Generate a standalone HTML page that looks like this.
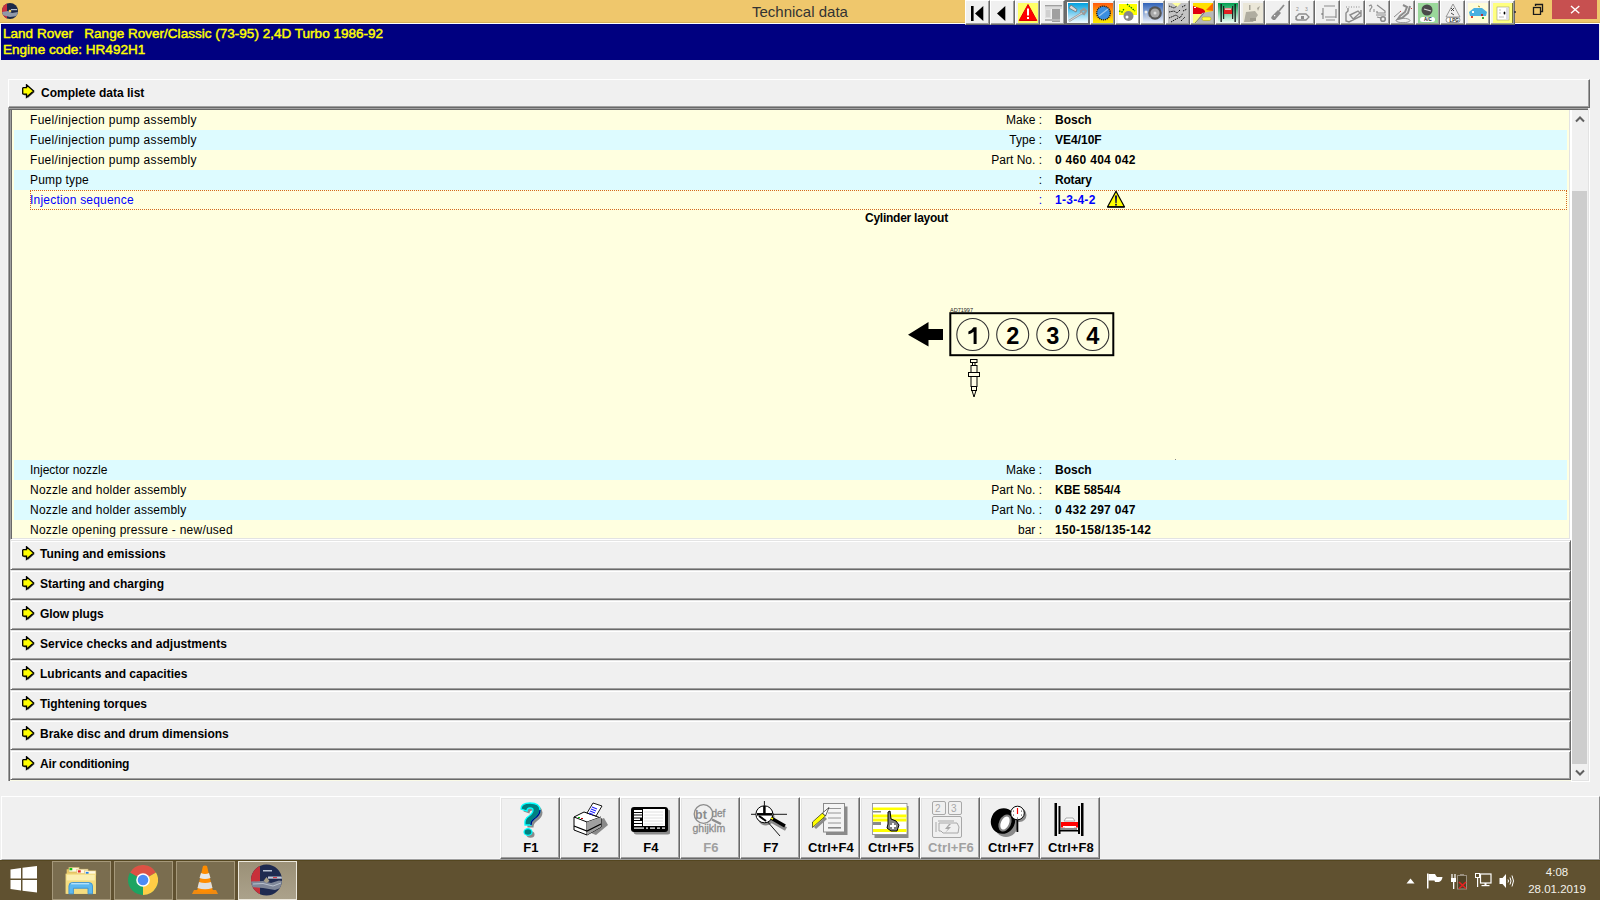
<!DOCTYPE html>
<html><head><meta charset="utf-8">
<style>
*{margin:0;padding:0;box-sizing:border-box}
html,body{width:1600px;height:900px;overflow:hidden;background:#f0f0f0;font-family:"Liberation Sans",sans-serif;position:relative}
.a{position:absolute}
svg{display:block}
#title{left:0;top:0;width:1600px;height:23px;background:#efc76c;border-bottom:1px solid #d7b05a}
#title .t{left:752px;top:3px;font-size:15px;color:#333}
#hdrline{left:0;top:23px;width:1600px;height:1px;background:#fff}
#hdr{left:1px;top:24px;width:1598px;height:36px;background:#000080;color:#ffff00;font-weight:normal;font-size:13.5px;letter-spacing:0.02px;-webkit-text-stroke:0.45px #ffff00}
#hdr .l1{left:2px;top:2px;white-space:pre}
#hdr .l2{left:2px;top:18px}
.tb{top:0;width:25px;height:25px;background:#f0f0f0;border-top:1px solid #fff;border-left:1px solid #fff;border-right:1px solid #696969;border-bottom:1px solid #696969;box-shadow:inset -1px -1px 0 #a0a0a0}
.tb svg{position:absolute;left:2px;top:2px}
.tb.pr{border:2px solid #6e6e6e;box-shadow:inset 1px 1px 0 #fff}
.tb.pr svg{left:1px;top:1px}
.sec{left:10px;width:1561px;height:30px;background:#f0f0f0;border-top:1px solid #e3e3e3;border-left:1px solid #e3e3e3;border-right:1px solid #696969;border-bottom:1px solid #696969;box-shadow:inset 1px 1px 0 #fff, inset -1px -1px 0 #a0a0a0}
.sec .lb{left:29px;top:6px;font-weight:bold;font-size:12px;color:#000}
.sec svg{position:absolute;left:11px;top:5px}
.row{left:14px;width:1553px;height:20px;font-size:12px;color:#000}
.y{background:#ffffe0}
.c{background:#ddfbff}
.row .l{left:16px;top:3px;letter-spacing:0.27px;white-space:nowrap}
.row .k{right:525px;top:3px;text-align:right;white-space:nowrap}
.row .v{left:1041px;top:3px;font-weight:bold;white-space:nowrap}
.fk{top:797px;width:60px;height:62px;background:#f0f0f0;border-top:1px solid #fff;border-left:1px solid #fff;border-right:1px solid #696969;border-bottom:1px solid #696969;box-shadow:inset -1px -1px 0 #a0a0a0, inset 1px 1px 0 #e3e3e3}
.fk .lb{left:1px;width:58px;top:42px;text-align:center;font-weight:bold;font-size:13px;letter-spacing:0.1px;white-space:nowrap}
.fk svg{position:absolute;left:9px;top:2px}
.tbtn{top:861px;width:59px;height:39px;background:#7a6d4f;border:1px solid #a5987a}
.tbtn.act{background:linear-gradient(#9b9077,#aba28b);border-color:#ece8dc}
</style></head><body>
<div id="title" class="a"><div class="t a">Technical data</div></div>
<div id="hdrline" class="a"></div>
<div id="hdr" class="a"><div class="l1 a">Land Rover   Range Rover/Classic (73-95) 2,4D Turbo 1986-92</div><div class="l2 a">Engine code: HR492H1</div></div>

<!-- TOOLBAR -->
<div class="tb a" style="left:965px"><svg width="20" height="20" viewBox="0 0 20 20"><rect x="3" y="3" width="2.6" height="15" fill="#000"/><path d="M7 10.5 L15.3 3 L15.3 18 Z" fill="#000"/></svg></div>
<div class="tb a" style="left:990px"><svg width="20" height="20" viewBox="0 0 20 20"><path d="M4 10.5 L12.3 3 L12.3 18 Z" fill="#000"/></svg></div>
<div class="tb a" style="left:1015px"><svg width="20" height="20" viewBox="0 0 20 20"><rect x="0" y="0" width="20" height="20" fill="#ffff66"/><path d="M10 1.5 L18.8 17.5 L1.2 17.5 Z" fill="#f00" stroke="#e00000" stroke-width="1" stroke-linejoin="round"/><rect x="9" y="5.5" width="2" height="7" fill="#fff"/><rect x="9" y="14" width="2" height="2" fill="#fff"/></svg></div>
<div class="tb a" style="left:1040px"><svg width="20" height="20" viewBox="0 0 20 20"><rect x="2" y="2" width="17" height="1.5" fill="#a0a0a0"/><rect x="2" y="4.5" width="17" height="1" fill="#c8c8c8"/><rect x="2" y="6" width="6" height="9" fill="#e0e0e0"/><rect x="3" y="7" width="4" height="7" fill="#d0d0d0"/><rect x="9" y="6" width="8" height="13" fill="#a0a0a0"/><rect x="2" y="16" width="15" height="2" fill="#b8b8b8"/></svg></div>
<div class="tb a pr" style="left:1065px"><svg width="20" height="20" viewBox="0 0 20 20"><defs><linearGradient id="g4" x1="0" y1="0" x2="0" y2="1"><stop offset="0" stop-color="#00a0e0"/><stop offset="1" stop-color="#f4fbff"/></linearGradient></defs><rect x="0" y="0" width="20" height="20" fill="url(#g4)"/><path d="M1 5 L8 9 L9 6.5 L3 2 Z" fill="#d8d8d8" stroke="#707070" stroke-width="0.8"/><path d="M1 18 L14 10 L16 11 L18 8 L16 6 L13 8 L13 10" fill="none" stroke="#9a9a9a" stroke-width="2.2"/><path d="M1 18 L14 10" stroke="#e8e8e8" stroke-width="0.8"/></svg></div>
<div class="tb a" style="left:1090px"><svg width="20" height="20" viewBox="0 0 20 20"><defs><linearGradient id="g5" x1="0" y1="0" x2="0" y2="1"><stop offset="0" stop-color="#ff5a10"/><stop offset="1" stop-color="#fff000"/></linearGradient></defs><rect x="0" y="0" width="20" height="20" fill="url(#g5)"/><circle cx="10.5" cy="10" r="6.8" fill="#3a8ee0" stroke="#1a1a1a" stroke-width="1.3" stroke-dasharray="1.2 0.8"/><path d="M6 13 L15 6" stroke="#9cc8f0" stroke-width="1.2"/></svg></div>
<div class="tb a" style="left:1115px"><svg width="20" height="20" viewBox="0 0 20 20"><rect x="0" y="0" width="20" height="20" fill="#ffffff"/><rect x="1" y="1" width="18" height="11" fill="#ffff00"/><circle cx="10.5" cy="13" r="5" fill="#888"/><circle cx="9" cy="14" r="1.5" fill="#fff"/><path d="M1 8 L4 9 L6 6 M9 1 L17 8" stroke="#008000" stroke-width="1.3" fill="none" stroke-dasharray="1.5 1"/></svg></div>
<div class="tb a" style="left:1140px"><svg width="20" height="20" viewBox="0 0 20 20"><defs><linearGradient id="g7" x1="0" y1="0" x2="0" y2="1"><stop offset="0" stop-color="#2f62b8"/><stop offset="1" stop-color="#eef2fb"/></linearGradient></defs><rect x="0" y="0" width="20" height="20" fill="url(#g7)"/><circle cx="12" cy="10" r="6.8" fill="#555"/><circle cx="12" cy="10" r="4.6" fill="#a8a8a8"/><circle cx="12" cy="10" r="1.5" fill="#ddd"/><circle cx="3" cy="9" r="1.5" fill="#eee"/><path d="M3 10.5 Q3 16 8 15" fill="none" stroke="#ccc" stroke-width="0.8"/></svg></div>
<div class="tb a" style="left:1165px"><svg width="20" height="20" viewBox="0 0 20 20"><rect x="0" y="0" width="20" height="20" fill="#c4c4c4"/><path d="M4 0 L13 0 L9 4 Z" fill="#ffffa0"/><path d="M1 3 L6 5 L9 3 M1 9 L6 8 L9 10 L12 7 M1 15 L8 12 L12 15 L15 10 M3 19 L10 15 M14 4 L18 2 M15 8 L19 6 M13 18 L17 14" stroke="#111" stroke-width="1" fill="none" stroke-dasharray="1.5 0.8"/></svg></div>
<div class="tb a" style="left:1190px"><svg width="20" height="20" viewBox="0 0 20 20"><rect x="0" y="0" width="20" height="20" fill="#ffff80"/><path d="M0 0 L20 0 L20 10 L0 10 Z" fill="#ffe000"/><path d="M13 7 L20 0 L20 8 Z" fill="#ff6a00"/><path d="M0 3 L10 6 L12 8 L12 11 L0 11 Z" fill="#e00010"/><rect x="1" y="4" width="2" height="1" fill="#fff"/><path d="M9 10 L20 8 L20 20 L3 20 Z" fill="#b8b8b8"/><path d="M2 20 L11 10" stroke="#666" stroke-width="0.8"/><rect x="9" y="14" width="9" height="3.5" rx="1.7" fill="#ffff40" stroke="#b0a000" stroke-width="0.5"/></svg></div>
<div class="tb a" style="left:1215px"><svg width="20" height="20" viewBox="0 0 20 20"><defs><linearGradient id="g10" x1="0" y1="0" x2="0" y2="1"><stop offset="0" stop-color="#00a050"/><stop offset="1" stop-color="#f2fff6"/></linearGradient></defs><rect x="0" y="0" width="20" height="20" fill="url(#g10)"/><rect x="2.5" y="1" width="1.3" height="18" fill="#111"/><rect x="16.5" y="1" width="1.3" height="18" fill="#111"/><rect x="5" y="3" width="1.2" height="13" fill="#222"/><rect x="14" y="3" width="1.2" height="13" fill="#222"/><path d="M6 7 L7 5 L13 5 L14 7 L14 11 L6 11 Z" fill="#e02020"/><rect x="7" y="5.5" width="6" height="1.2" fill="#fff"/></svg></div>
<div class="tb a" style="left:1240px"><svg width="20" height="20" viewBox="0 0 20 20"><rect x="0" y="0" width="20" height="20" fill="#ebe7d8"/><path d="M1 19 L3 9 L12 8 L15 12 L10 19 Z" fill="#b0ada0"/><rect x="6" y="2" width="1.5" height="5" fill="#a8a598"/><path d="M14 5 L17 3 L15 8" fill="#a8a598"/><rect x="7" y="15" width="6" height="3" fill="#9c998c"/></svg></div>
<div class="tb a" style="left:1265px"><svg width="20" height="20" viewBox="0 0 20 20"><path d="M16 2 L11 8" stroke="#8c8c8c" stroke-width="1.8"/><path d="M4 13 L10 7 L13 10 L7 17 L5 17 L3 15 Z" fill="#8c8c8c"/><rect x="6" y="12" width="1.3" height="1.3" fill="#fff"/></svg></div>
<div class="tb a" style="left:1290px"><svg width="20" height="20" viewBox="0 0 20 20"><text x="3" y="8" font-size="5" font-family="Liberation Sans" fill="#8c8c8c">2</text><text x="12" y="8" font-size="5" font-family="Liberation Sans" fill="#8c8c8c">3</text><path d="M3 14 L6 11 L13 11 L16 14 L13 17 L4 17 Z M3 13 L3 17" fill="none" stroke="#8c8c8c" stroke-width="1.3"/><rect x="8" y="13" width="3" height="3" fill="#8c8c8c"/></svg></div>
<div class="tb a" style="left:1315px"><svg width="20" height="20" viewBox="0 0 20 20"><path d="M6 3 L17 3 M5 5 L5 16 M18 6 L18 15 M7 14 L18 14 M8 17 L17 17 M4 10 L4 12" stroke="#8c8c8c" stroke-width="1.2" fill="none"/></svg></div>
<div class="tb a" style="left:1340px"><svg width="20" height="20" viewBox="0 0 20 20"><path d="M3 4 L18 4" stroke="#8c8c8c" stroke-width="1" stroke-dasharray="1 1.5"/><path d="M5 5 L5 8 L3 10 L3 18 L6 19 L18 13 L18 7 M7 12 L15 8 L17 10 L10 16 Z" stroke="#8c8c8c" stroke-width="1.4" fill="none"/></svg></div>
<div class="tb a" style="left:1365px"><svg width="20" height="20" viewBox="0 0 20 20"><path d="M1 3 L3 2 L4 4 L2 7 L2 9" stroke="#8c8c8c" stroke-width="1.1" fill="none"/><path d="M9 2 L17 8 L17 10 L9 10 L9 8 M8 12 L18 12 M9 14 L13 15" stroke="#8c8c8c" stroke-width="1.2" fill="none"/><circle cx="15" cy="16" r="2.3" fill="none" stroke="#8c8c8c" stroke-width="1.6"/><path d="M6 6 L6 9" stroke="#8c8c8c"/></svg></div>
<div class="tb a" style="left:1390px"><svg width="20" height="20" viewBox="0 0 20 20"><path d="M10 2 L14 4 L12 9 L7 13 L5 16 L9 15 L15 10 L17 3" stroke="#8c8c8c" stroke-width="2" fill="none"/><path d="M1 14 L8 8" stroke="#8c8c8c" stroke-width="1"/><ellipse cx="10" cy="17.5" rx="7" ry="2.2" fill="none" stroke="#8c8c8c" stroke-width="0.9"/><rect x="18" y="5" width="1" height="1" fill="#d04040"/><rect x="7" y="8" width="1" height="1" fill="#c05050"/></svg></div>
<div class="tb a" style="left:1415px"><svg width="20" height="20" viewBox="0 0 20 20"><rect x="0" y="0" width="20" height="20" fill="#9ad89a"/><circle cx="9" cy="7" r="5.5" fill="#4a4a4a"/><path d="M6 6 L13 8" stroke="#d8d8d8" stroke-width="1.3"/><rect x="2" y="14" width="15" height="5" rx="2.5" fill="#fff"/><text x="6" y="18.3" font-size="4.5" font-family="Liberation Sans" font-weight="bold" fill="#222">A/C</text></svg></div>
<div class="tb a" style="left:1440px"><svg width="20" height="20" viewBox="0 0 20 20"><path d="M10 1 L17 14 L3 14 Z" fill="none" stroke="#8c8c8c" stroke-width="0.9"/><path d="M8 5 L11 8 M11 5 L8 8 M8 10 L11 12" stroke="#222" stroke-width="0.8"/><rect x="3" y="14.5" width="14" height="5" rx="2.5" fill="#fff" stroke="#8c8c8c" stroke-width="0.9"/><text x="6.5" y="18.5" font-size="4.5" font-family="Liberation Sans" font-weight="bold" fill="#222">LPG</text></svg></div>
<div class="tb a" style="left:1465px"><svg width="20" height="20" viewBox="0 0 20 20"><rect x="0" y="0" width="20" height="20" fill="#fffcd8"/><path d="M1 9 L6 5 L14 5 L19 9 L18 13 L2 13 Z" fill="#48b0e0"/><circle cx="4" cy="14" r="1" fill="#c00"/><circle cx="14" cy="12" r="1" fill="#c00"/><circle cx="15" cy="15" r="1" fill="#080"/><rect x="4" y="8" width="2" height="2" fill="#fff"/><path d="M10 3 L12 4" stroke="#a09020"/></svg></div>
<div class="tb a" style="left:1490px"><svg width="20" height="20" viewBox="0 0 20 20"><rect x="0" y="0" width="20" height="20" fill="#ffff80"/><rect x="19" y="0" width="1" height="20" fill="#7a7a30"/><rect x="4" y="4" width="12" height="13" fill="#fff" stroke="#a0a070" stroke-width="0.6"/><rect x="13" y="5" width="2.5" height="11.5" fill="#dcdce6"/><ellipse cx="11.5" cy="10" rx="0.9" ry="1.6" fill="#000"/><path d="M6 7 L8 7 M6 10 L8 10 M6 14 L11 14" stroke="#aaa" stroke-width="0.8"/></svg></div>


<!-- complete data list header -->
<div class="a" style="left:8px;top:79px;width:1582px;height:29px;background:#f0f0f0;border-top:1px solid #fff;border-left:1px solid #fff;border-right:1px solid #696969;border-bottom:1px solid #696969;box-shadow:inset -1px -1px 0 #a0a0a0">
  <div class="a" style="left:13px;top:4px"><svg width="14" height="16" viewBox="0 0 14 16"><path d="M4.5 0.8 L11.6 7 L4.5 13.2 L4.5 10.2 L1.2 10.2 L0.7 9.5 L0.7 4.3 L1.2 3.7 L4.5 3.7 Z" transform="translate(1,1)" fill="#404040"/><path d="M4.5 0.8 L11.6 7 L4.5 13.2 L4.5 10.2 L1.2 10.2 L0.7 9.5 L0.7 4.3 L1.2 3.7 L4.5 3.7 Z" fill="#ffff00" stroke="#000" stroke-width="1.3"/></svg></div>
  <div class="a" style="left:32px;top:6px;font-weight:bold;font-size:12px">Complete data list</div>
</div>

<!-- list frame -->
<div class="a" style="left:7px;top:108px;width:1px;height:673px;background:#f5f5f5"></div>
<div class="a" style="left:8px;top:108px;width:1580px;height:673px;border-left:1px solid #a0a0a0;border-top:1px solid #a0a0a0;box-shadow:inset 1px 1px 0 #696969;background:#f0f0f0"></div>
<div class="a" style="left:10px;top:110px;width:1561px;height:430px;border-left:1px solid #a0a0a0;border-bottom:1px solid #fff;border-right:1px solid #fff;box-shadow:inset 1px 0 0 #696969, inset -1px -1px 0 #e3e3e3;background:#ffffe0"></div>
<div class="a" style="left:10px;top:780px;width:1561px;height:1px;background:#fafae6"></div>
<div class="row a y" style="top:110px"><div class="l a" style="letter-spacing:0.31px">Fuel/injection pump assembly</div><div class="k a">Make :</div><div class="v a">Bosch</div></div>
<div class="row a c" style="top:130px"><div class="l a" style="letter-spacing:0.31px">Fuel/injection pump assembly</div><div class="k a">Type :</div><div class="v a">VE4/10F</div></div>
<div class="row a y" style="top:150px"><div class="l a" style="letter-spacing:0.31px">Fuel/injection pump assembly</div><div class="k a">Part No. :</div><div class="v a" style="letter-spacing:0.3px">0 460 404 042</div></div>
<div class="row a c" style="top:170px"><div class="l a" style="letter-spacing:0.17px">Pump type</div><div class="k a">:</div><div class="v a" style="letter-spacing:-0.2px">Rotary</div></div>
<div class="row a y" style="top:190px"><div class="l a" style="color:#0000ff;letter-spacing:0.21px">Injection sequence</div><div class="k a" style="color:#0000ff">:</div><div class="v a" style="color:#0000ff;letter-spacing:0.27px">1-3-4-2</div></div>
<div class="a" style="left:30px;top:190px;width:1537px;height:20px;border:1px dotted #d2691e"></div>

<div class="row a c" style="top:460px"><div class="l a" style="letter-spacing:0px">Injector nozzle</div><div class="k a">Make :</div><div class="v a">Bosch</div></div>
<div class="row a y" style="top:480px"><div class="l a" style="letter-spacing:0.22px">Nozzle and holder assembly</div><div class="k a">Part No. :</div><div class="v a">KBE 5854/4</div></div>
<div class="row a c" style="top:500px"><div class="l a" style="letter-spacing:0.22px">Nozzle and holder assembly</div><div class="k a">Part No. :</div><div class="v a" style="letter-spacing:0.3px">0 432 297 047</div></div>
<div class="row a y" style="top:520px;height:18px"><div class="l a" style="letter-spacing:0.24px">Nozzle opening pressure - new/used</div><div class="k a">bar :</div><div class="v a" style="letter-spacing:0.33px">150-158/135-142</div></div>

<div class="sec a" style="top:540px"><svg width="14" height="16" viewBox="0 0 14 16"><path d="M4.5 0.8 L11.6 7 L4.5 13.2 L4.5 10.2 L1.2 10.2 L0.7 9.5 L0.7 4.3 L1.2 3.7 L4.5 3.7 Z" transform="translate(1,1)" fill="#404040"/><path d="M4.5 0.8 L11.6 7 L4.5 13.2 L4.5 10.2 L1.2 10.2 L0.7 9.5 L0.7 4.3 L1.2 3.7 L4.5 3.7 Z" fill="#ffff00" stroke="#000" stroke-width="1.3"/></svg><div class="lb a" style="letter-spacing:0px">Tuning and emissions</div></div>
<div class="sec a" style="top:570px"><svg width="14" height="16" viewBox="0 0 14 16"><path d="M4.5 0.8 L11.6 7 L4.5 13.2 L4.5 10.2 L1.2 10.2 L0.7 9.5 L0.7 4.3 L1.2 3.7 L4.5 3.7 Z" transform="translate(1,1)" fill="#404040"/><path d="M4.5 0.8 L11.6 7 L4.5 13.2 L4.5 10.2 L1.2 10.2 L0.7 9.5 L0.7 4.3 L1.2 3.7 L4.5 3.7 Z" fill="#ffff00" stroke="#000" stroke-width="1.3"/></svg><div class="lb a" style="letter-spacing:0px">Starting and charging</div></div>
<div class="sec a" style="top:600px"><svg width="14" height="16" viewBox="0 0 14 16"><path d="M4.5 0.8 L11.6 7 L4.5 13.2 L4.5 10.2 L1.2 10.2 L0.7 9.5 L0.7 4.3 L1.2 3.7 L4.5 3.7 Z" transform="translate(1,1)" fill="#404040"/><path d="M4.5 0.8 L11.6 7 L4.5 13.2 L4.5 10.2 L1.2 10.2 L0.7 9.5 L0.7 4.3 L1.2 3.7 L4.5 3.7 Z" fill="#ffff00" stroke="#000" stroke-width="1.3"/></svg><div class="lb a" style="letter-spacing:-0.12px">Glow plugs</div></div>
<div class="sec a" style="top:630px"><svg width="14" height="16" viewBox="0 0 14 16"><path d="M4.5 0.8 L11.6 7 L4.5 13.2 L4.5 10.2 L1.2 10.2 L0.7 9.5 L0.7 4.3 L1.2 3.7 L4.5 3.7 Z" transform="translate(1,1)" fill="#404040"/><path d="M4.5 0.8 L11.6 7 L4.5 13.2 L4.5 10.2 L1.2 10.2 L0.7 9.5 L0.7 4.3 L1.2 3.7 L4.5 3.7 Z" fill="#ffff00" stroke="#000" stroke-width="1.3"/></svg><div class="lb a" style="letter-spacing:0.05px">Service checks and adjustments</div></div>
<div class="sec a" style="top:660px"><svg width="14" height="16" viewBox="0 0 14 16"><path d="M4.5 0.8 L11.6 7 L4.5 13.2 L4.5 10.2 L1.2 10.2 L0.7 9.5 L0.7 4.3 L1.2 3.7 L4.5 3.7 Z" transform="translate(1,1)" fill="#404040"/><path d="M4.5 0.8 L11.6 7 L4.5 13.2 L4.5 10.2 L1.2 10.2 L0.7 9.5 L0.7 4.3 L1.2 3.7 L4.5 3.7 Z" fill="#ffff00" stroke="#000" stroke-width="1.3"/></svg><div class="lb a" style="letter-spacing:0px">Lubricants and capacities</div></div>
<div class="sec a" style="top:690px"><svg width="14" height="16" viewBox="0 0 14 16"><path d="M4.5 0.8 L11.6 7 L4.5 13.2 L4.5 10.2 L1.2 10.2 L0.7 9.5 L0.7 4.3 L1.2 3.7 L4.5 3.7 Z" transform="translate(1,1)" fill="#404040"/><path d="M4.5 0.8 L11.6 7 L4.5 13.2 L4.5 10.2 L1.2 10.2 L0.7 9.5 L0.7 4.3 L1.2 3.7 L4.5 3.7 Z" fill="#ffff00" stroke="#000" stroke-width="1.3"/></svg><div class="lb a" style="letter-spacing:-0.09px">Tightening torques</div></div>
<div class="sec a" style="top:720px"><svg width="14" height="16" viewBox="0 0 14 16"><path d="M4.5 0.8 L11.6 7 L4.5 13.2 L4.5 10.2 L1.2 10.2 L0.7 9.5 L0.7 4.3 L1.2 3.7 L4.5 3.7 Z" transform="translate(1,1)" fill="#404040"/><path d="M4.5 0.8 L11.6 7 L4.5 13.2 L4.5 10.2 L1.2 10.2 L0.7 9.5 L0.7 4.3 L1.2 3.7 L4.5 3.7 Z" fill="#ffff00" stroke="#000" stroke-width="1.3"/></svg><div class="lb a" style="letter-spacing:0px">Brake disc and drum dimensions</div></div>
<div class="sec a" style="top:750px"><svg width="14" height="16" viewBox="0 0 14 16"><path d="M4.5 0.8 L11.6 7 L4.5 13.2 L4.5 10.2 L1.2 10.2 L0.7 9.5 L0.7 4.3 L1.2 3.7 L4.5 3.7 Z" transform="translate(1,1)" fill="#404040"/><path d="M4.5 0.8 L11.6 7 L4.5 13.2 L4.5 10.2 L1.2 10.2 L0.7 9.5 L0.7 4.3 L1.2 3.7 L4.5 3.7 Z" fill="#ffff00" stroke="#000" stroke-width="1.3"/></svg><div class="lb a" style="letter-spacing:-0.17px">Air conditioning</div></div>

<div class="a" style="left:865px;top:211px;font-weight:bold;font-size:12px;letter-spacing:-0.25px">Cylinder layout</div>
<div class="a" style="left:1107px;top:190px"><svg width="20" height="19" viewBox="0 0 20 19"><path d="M9 1.2 L17.4 16.8 L0.6 16.8 Z" fill="#ffff00" stroke="#000" stroke-width="1.2" stroke-linejoin="round"/><rect x="0.3" y="16.3" width="17.4" height="1.3" fill="#000"/><path d="M7.9 5.5 L10.1 5.5 L9.6 13 L8.4 13 Z" fill="#10104a"/><rect x="8.1" y="13.8" width="1.8" height="1.8" fill="#10104a"/></svg></div>
<div class="a" style="left:900px;top:300px"><svg width="220" height="105" viewBox="0 0 220 105">
<path d="M8 34.7 L28.5 22 L28.5 29 L43 29 L43 40 L28.5 40 L28.5 46.5 Z" fill="#000"/>
<rect x="50.3" y="13.2" width="163" height="42" fill="none" stroke="#000" stroke-width="2"/>
<text x="50" y="12" font-size="5.5" font-family="Liberation Sans" fill="#222">AD71997</text>
<g fill="none" stroke="#333" stroke-width="1.1">
<circle cx="72.8" cy="34.5" r="16"/><circle cx="112.7" cy="34.5" r="16"/><circle cx="152.8" cy="34.5" r="16"/><circle cx="192.8" cy="34.5" r="16"/></g>
<g font-family="Liberation Sans" font-weight="bold" font-size="23.5" fill="#000" text-anchor="middle">
<path d="M73.6 27.3 L76.6 27.3 L76.6 44 L73.6 44 L73.6 31.8 Q71 33.8 68.4 34.3 L68.4 31.6 Q72 30 73.6 27.3 Z" fill="#000"/><text x="112.7" y="43.5">2</text><text x="152.8" y="43.5">3</text><text x="192.8" y="43.5">4</text></g>
<g fill="#fffde6" stroke="#000" stroke-width="1">
<rect x="70.5" y="59.5" width="6.5" height="3"/>
<rect x="72.5" y="62.5" width="2.5" height="3"/>
<rect x="71" y="65.5" width="6" height="7"/>
<rect x="68.5" y="72.5" width="11" height="4"/>
<rect x="71" y="76.5" width="6" height="10"/>
<rect x="71.5" y="86.5" width="5" height="4"/>
<path d="M72 90.5 L76 90.5 L74 97 Z"/>
</g>
</svg></div>
<div class="a" style="left:1175px;top:459px;width:1px;height:1px;background:#888"></div>

<div class="a" style="left:2px;top:3px"><svg width="16" height="16" viewBox="0 0 16 16"><defs><clipPath id="tc"><circle cx="8" cy="8" r="8"/></clipPath></defs><g clip-path="url(#tc)"><rect width="16" height="16" fill="#1e2848"/><rect width="5" height="16" fill="#c83040"/><path d="M0 9 L6 8 L10 10 L16 9 L16 13 L8 14 L0 12 Z" fill="#9098a8"/><rect x="9" y="6" width="6" height="1.2" fill="#b8c0d0"/></g><circle cx="8" cy="8" r="1.3" fill="#f0d060"/></svg></div>
<div class="a" style="left:1552px;top:0;width:45px;height:19px;background:#c75050"></div>
<div class="a" style="left:1570px;top:5px"><svg width="10" height="10" viewBox="0 0 10 10"><path d="M1 1 L9.3 8.3 M9.3 1 L1 8.3" stroke="#fff" stroke-width="1.4"/></svg></div>
<div class="a" style="left:1514px;top:11px;width:2px;height:2px;background:#2a2a3a;border-radius:1px"></div>
<div class="a" style="left:1532px;top:3px"><svg width="12" height="12" viewBox="0 0 12 12"><rect x="1.5" y="4.5" width="7" height="7" fill="none" stroke="#1a1a1a" stroke-width="1.3"/><path d="M3.5 3 L3.5 1.5 L10.5 1.5 L10.5 8.5 L9 8.5" fill="none" stroke="#1a1a1a" stroke-width="1.3"/></svg></div>


<!-- scrollbar -->
<div class="a" style="left:1571px;top:110px;width:19px;height:672px;background:#f0f0f0;border:1px solid #fff;border-top:0;box-shadow:inset -1px -1px 0 #e3e3e3"></div>
<div class="a" style="left:1572px;top:191px;width:15px;height:573px;background:#cdcdcd"></div>
<div class="a" style="left:1575px;top:115px"><svg width="10" height="8" viewBox="0 0 10 8"><path d="M1 6.5 L5 2.5 L9 6.5" fill="none" stroke="#606060" stroke-width="2"/></svg></div>
<div class="a" style="left:1575px;top:769px"><svg width="10" height="8" viewBox="0 0 10 8"><path d="M1 1.5 L5 5.5 L9 1.5" fill="none" stroke="#606060" stroke-width="2"/></svg></div>


<!-- bottom strip -->
<div class="a" style="left:1px;top:796px;width:1599px;height:64px;border-top:1px solid #fff;border-left:1px solid #fff;border-right:1px solid #8a8a8a;border-bottom:1px solid #a0a0a0;box-shadow:inset 0 -1px 0 #f5f5f5"></div>
<div class="fk a" style="left:500px"><svg width="40" height="40" viewBox="0 0 40 40"><g transform="translate(2.5,2.5)" fill="#8a8a8a"><path d="M11 9 Q11 3 20 3 Q30 3 30 10 Q30 15 24 19 Q21 21 21 25 L15 25 Q14 19 19 16 Q23 13 23 10 Q23 8 20 8 Q17 8 17 11 Z"/><ellipse cx="18" cy="32" rx="4" ry="3.3"/></g><path d="M11 9 Q11 3 20 3 Q30 3 30 10 Q30 15 24 19 Q21 21 21 25 L15 25 Q14 19 19 16 Q23 13 23 10 Q23 8 20 8 Q17 8 17 11 Z" fill="#008080" stroke="#00ffff" stroke-width="1.3"/><path d="M30 10 Q30 15 24 19 Q21 21 21 25" fill="none" stroke="#000080" stroke-width="1.3"/><ellipse cx="18" cy="32" rx="4" ry="3.3" fill="#008080" stroke="#00ffff" stroke-width="1.2"/></svg><div class="lb a">F1</div></div>
<div class="fk a" style="left:560px"><svg width="40" height="40" viewBox="0 0 40 40"><path d="M8 28 L26 35 L38 25 L34 18 Z" fill="#8a8a8a"/><path d="M4 17 L14 12 L31 18 L31 27 L17 35 L4 30 Z" fill="#fff" stroke="#000" stroke-width="1"/><path d="M4 17 L17 22 L31 17 M17 22 L17 35" fill="none" stroke="#000" stroke-width="1"/><path d="M17 22 L31 17 L31 27 L17 35 Z" fill="#a0a0a0"/><path d="M4 26 L17 31 L31 24" fill="none" stroke="#000" stroke-width="1.2"/><path d="M17 13 L23 3 L32 6 L26 16 Z" fill="#fff" stroke="#000" stroke-width="0.9"/><path d="M22 7 L27 9 M21 9 L26 11 M20 11 L25 13 M19 13 L23 14.5" stroke="#2020ff" stroke-width="1.1"/><rect x="8" y="17" width="2" height="1" fill="#00c000"/><rect x="11" y="18" width="2" height="1" fill="#c00000"/></svg><div class="lb a">F2</div></div>
<div class="fk a" style="left:620px"><svg width="40" height="40" viewBox="0 0 40 40"><rect x="3.5" y="9.5" width="37" height="25" rx="3" fill="#8a8a8a"/><rect x="1" y="7" width="37" height="25" rx="3" fill="#000"/><rect x="13" y="9" width="22" height="17" fill="#fff"/><g stroke="#d8d8d8" stroke-width="0.8"><path d="M14 12 L33 12 M14 15 L33 15 M14 18 L33 18 M14 21 L33 21 M14 24 L33 24"/></g><g fill="#fff"><rect x="4" y="10" width="8" height="2"/><rect x="4" y="13" width="8" height="1.5"/><rect x="4" y="15.5" width="8" height="2"/><rect x="4" y="18.5" width="6" height="1.5"/><rect x="4" y="21" width="8" height="2"/><rect x="4" y="24" width="8" height="2"/><rect x="4" y="27.5" width="10" height="1.2"/><rect x="16" y="27.5" width="2" height="1.2"/><rect x="20" y="27.5" width="5" height="1.2"/><rect x="27" y="27.5" width="3" height="1.2"/><rect x="32" y="27.5" width="3" height="1.2"/></g></svg><div class="lb a">F4</div></div>
<div class="fk a" style="left:680px"><svg width="40" height="40" viewBox="0 0 40 40"><g fill="none" stroke="#8c8c8c"><circle cx="13.5" cy="14" r="9.3" stroke-width="1.3"/><path d="M22 19.5 L31 24" stroke-width="2.4"/></g><g font-family="Liberation Sans" fill="#8c8c8c"><text x="5" y="19" font-size="12.5" font-weight="bold">bt</text><text x="21.5" y="17" font-size="10" stroke="#8c8c8c" stroke-width="0.3">def</text><text x="2.5" y="31.5" font-size="10.5" stroke="#8c8c8c" stroke-width="0.3">ghijklm</text></g></svg><div class="lb a" style="color:#a0a0a0">F6</div></div>
<div class="fk a" style="left:740px"><svg width="40" height="40" viewBox="0 0 40 40"><path d="M20 20 L36 29" stroke="#8a8a8a" stroke-width="4"/><circle cx="16" cy="17" r="8.5" fill="#8a8a8a"/><path d="M1 14.3 L37 14.3 M14.4 1 L14.4 14 M16 20 L30 36" stroke="#000" stroke-width="0.9"/><circle cx="14.4" cy="14.3" r="8.5" fill="#fff" stroke="#000" stroke-width="1"/><path d="M7 14.3 L22 14.3" stroke="#000" stroke-width="2.5"/><path d="M14.4 6 L14.4 14" stroke="#000" stroke-width="2.5"/><path d="M9 16 L16 21" stroke="#000" stroke-width="2"/><path d="M21 18 L35 26" stroke="#000" stroke-width="3.2"/><path d="M21 18 L23 19" stroke="#ffff00" stroke-width="1.5"/></svg><div class="lb a">F7</div></div>
<div class="fk a" style="left:800px"><svg width="40" height="40" viewBox="0 0 40 40"><rect x="16" y="6.5" width="21.5" height="28.5" fill="#8a8a8a"/><rect x="13.5" y="3.5" width="21" height="28.5" fill="#f4f4f4" stroke="#8a8a8a" stroke-width="1"/><g stroke="#8a8a8a" stroke-width="0.9"><path d="M18 8.5 L31 8.5 M18 13 L31 13 M18 18 L31 18 M18 23 L31 23"/></g><rect x="18" y="27" width="13" height="1.6" fill="#8a8a8a"/><path d="M4 27 L15 17 L17 19 L6 29 Z" fill="#8a8a8a"/><path d="M2.5 22 L12.5 13 L15.5 16 L2.5 27.5 Z" fill="#ffff00" stroke="#000" stroke-width="0.6"/><path d="M12.5 13 L19 7.5 L15.5 16 Z" fill="#fff" stroke="#000" stroke-width="0.6"/></svg><div class="lb a">Ctrl+F4</div></div>
<div class="fk a" style="left:860px"><svg width="40" height="40" viewBox="0 0 40 40"><rect x="4.5" y="6" width="34" height="32" fill="#8a8a8a"/><rect x="2.5" y="3.5" width="34.5" height="31" fill="#fff" stroke="#8a8a8a" stroke-width="0.8"/><g fill="#ffff00"><rect x="3" y="7.5" width="33.5" height="2.5"/><rect x="3" y="14.5" width="33.5" height="3"/><rect x="3" y="18.5" width="33.5" height="3"/><rect x="3" y="29" width="33.5" height="3"/></g><g fill="#8a8a8a"><rect x="3" y="22" width="8" height="3"/><rect x="3" y="11" width="8" height="1.5"/></g><path d="M18 12 L20 11 L21 19 L26 21 L29 25 L27 31 L21 31 L17 28 L18 24 Z" fill="#808080" stroke="#000" stroke-width="1"/><path d="M23 23 L23 29 M20 26 L26 26" stroke="#fff" stroke-width="1.8"/></svg><div class="lb a">Ctrl+F5</div></div>
<div class="fk a" style="left:920px"><svg width="40" height="40" viewBox="0 0 40 40"><g fill="none" stroke="#a8a8a8" stroke-width="1"><rect x="2.5" y="1.5" width="13" height="13" rx="1.5"/><rect x="18.5" y="1.5" width="13" height="13" rx="1.5"/><rect x="2.5" y="16.5" width="29" height="21" rx="1.5"/><path d="M6 22 L6 32 M8 21 L24 21 M9 23 L27 23 L29 27 L28 33 L13 33 L11 31 L9 31 L9 23"/></g><g font-family="Liberation Sans" fill="#a8a8a8" font-size="10"><text x="5" y="12">2</text><text x="21" y="12">3</text></g><path d="M19 24 L15 29 L18 29 L15 33 L21 27 L18 27 L21 24 Z" fill="#a8a8a8"/></svg><div class="lb a" style="color:#a0a0a0">Ctrl+F6</div></div>
<div class="fk a" style="left:980px"><svg width="40" height="40" viewBox="0 0 40 40"><g transform="translate(2,2)" fill="#8a8a8a"><ellipse cx="14" cy="22" rx="12" ry="13"/><circle cx="27.5" cy="13" r="7"/></g><ellipse cx="13" cy="21" rx="12" ry="13" fill="#000" transform="rotate(25 13 21)"/><ellipse cx="15" cy="23" rx="6" ry="9" fill="#808080" transform="rotate(25 15 23)"/><ellipse cx="15" cy="23" rx="4" ry="7" fill="#fff" transform="rotate(25 15 23)"/><rect x="26.5" y="17" width="1.8" height="15" fill="#000"/><circle cx="27.5" cy="13" r="6.8" fill="#fff" stroke="#000" stroke-width="1"/><path d="M27.5 8 L27.5 14" stroke="#ff0000" stroke-width="1.2"/><g fill="#000"><circle cx="23.5" cy="11" r="0.5"/><circle cx="31.5" cy="11" r="0.5"/><circle cx="23.5" cy="15" r="0.5"/><circle cx="31.5" cy="15" r="0.5"/><circle cx="27.5" cy="18" r="0.5"/></g></svg><div class="lb a">Ctrl+F7</div></div>
<div class="fk a" style="left:1040px"><svg width="40" height="40" viewBox="0 0 40 40"><g fill="#000"><rect x="4.5" y="3" width="2.5" height="33"/><rect x="8.5" y="6" width="2" height="28"/><rect x="28" y="6" width="2" height="28"/><rect x="31" y="3" width="2.5" height="33"/></g><rect x="10" y="30" width="18" height="1.5" fill="#000"/><rect x="11" y="28" width="16" height="2" fill="#8a8a8a"/><path d="M14 21 L16 18 L23 18 L25 21 Z" fill="#fff" stroke="#8a8a8a" stroke-width="0.7"/><path d="M11 22 L28 22 L28 26 L11 26 Z" fill="#ff0000"/><rect x="11" y="25" width="4" height="2.5" fill="#ff0000"/><rect x="24" y="25" width="4" height="2.5" fill="#ff0000"/><rect x="13" y="26" width="13" height="1.5" fill="#fff"/></svg><div class="lb a">Ctrl+F8</div></div>


<div class="a" style="left:0;top:860px;width:1600px;height:40px;background:#605130"></div>
<div class="a" style="left:0;top:860px;width:1600px;height:1px;background:#54461f"></div>
<div class="a" style="left:10px;top:866px"><svg width="28" height="27" viewBox="0 0 28 27"><path d="M0.5 3.5 L11 2 L11 12.5 L0.5 12.5 Z M12.5 1.8 L27 0 L27 12.5 L12.5 12.5 Z M0.5 14 L11 14 L11 24.5 L0.5 23 Z M12.5 14 L27 14 L27 26.5 L12.5 24.7 Z" fill="#fff"/></svg></div>
<div class="a tbtn" style="left:52px"></div>
<div class="a tbtn" style="left:114px"></div>
<div class="a tbtn" style="left:176px"></div>
<div class="a tbtn act" style="left:238px"></div>
<div class="a" style="left:65px;top:866px"><svg width="32" height="31" viewBox="0.5 1.5 28.5 27">
<path d="M2 4 L12 4 L13 6 L28 6 L28 26 L2 26 Z" fill="#e8c868"/>
<rect x="4" y="2.5" width="9" height="4" fill="#fff8e0" stroke="#d8b860" stroke-width="0.5"/><rect x="4.5" y="3" width="2.5" height="2" fill="#10c010"/>
<rect x="11" y="4" width="10" height="4" fill="#fff8e0" stroke="#d8b860" stroke-width="0.5"/><rect x="12" y="5" width="2.5" height="2" fill="#e02020"/>
<rect x="18" y="5.5" width="10" height="4" fill="#fff8e0" stroke="#d8b860" stroke-width="0.5"/><rect x="19" y="6.5" width="2.5" height="2" fill="#2080f0"/>
<path d="M1 8 L28 8 L28 26 L1 26 Z" fill="#f4dc80"/><path d="M2 9 L27 9 L27 14 L2 14 Z" fill="#fbeeb0"/>
<path d="M4 26 L4 19 Q4 16 7 16 L22 16 Q25 16 25 19 L25 26 L21 26 L21 21 L8 21 L8 26 Z" fill="#5cb8f0" stroke="#3a90d0" stroke-width="0.8"/>
<path d="M6 17 L22 17" stroke="#c8ecff" stroke-width="1"/></svg></div>
<div class="a" style="left:128px;top:865px"><svg width="30" height="30" viewBox="0 0 30 30">
<circle cx="15" cy="15" r="15" fill="#1da462"/>
<path d="M15 15 L2 7.5 A15 15 0 0 1 28 7.5 Z" fill="#dd5144"/>
<path d="M15 15 L28 7.5 A15 15 0 0 1 15 30 Z" fill="#ffcd46"/>
<circle cx="15" cy="15" r="6.8" fill="#fff"/><circle cx="15" cy="15" r="5.3" fill="#4c8bf5"/></svg></div>
<div class="a" style="left:191px;top:865px"><svg width="28" height="30" viewBox="0 0 28 30">
<path d="M3 25 L25 25 L27 29 L1 29 Z" fill="#f08a10"/>
<path d="M12 1 Q14 0 16 1 L22 26 Q14 29 6 26 Z" fill="#ff8c00"/>
<path d="M10 8 Q14 10 18 8 L19.5 13 Q14 15 8.5 13 Z" fill="#e8e8e8"/>
<path d="M8 17 Q14 19 20 17 L21.5 23 Q14 25.5 6.5 23 Z" fill="#e0e0e0"/></svg></div>
<div class="a" style="left:251px;top:864px"><svg width="32" height="32" viewBox="0 0 32 32">
<defs><clipPath id="dc"><circle cx="15.5" cy="16" r="15.5"/></clipPath></defs>
<g clip-path="url(#dc)"><rect x="0" y="0" width="32" height="32" fill="#1e2a50"/><rect x="0" y="0" width="9" height="32" fill="#c8303a"/>
<path d="M0 17.5 L12 17 L20 19 L28 16.5 L32 17 L32 23 L24 26 L12 24 L0 23 Z" fill="#7e8698"/><path d="M2 20 L12 19.5 L22 22 L30 19" stroke="#b8c0cc" stroke-width="1" fill="none"/><rect x="17" y="12.5" width="14" height="2.2" fill="#c0c8d8"/><rect x="22" y="13" width="4" height="1.2" fill="#d04050"/><rect x="12" y="6" width="9" height="1.5" fill="#b8c0d0"/></g>
<path d="M15.5 13 L18.5 17 L15.5 19 L12.5 17 Z" fill="#a89f88"/></svg></div>
<div class="a" style="left:1406px;top:878px"><svg width="10" height="6" viewBox="0 0 10 6"><path d="M0.5 5.5 L4.5 0.5 L8.5 5.5 Z" fill="#fff"/></svg></div>
<div class="a" style="left:1427px;top:873px"><svg width="17" height="16" viewBox="0 0 17 16"><rect x="0" y="0.5" width="1.5" height="15" fill="#fff"/><path d="M1.5 1 L8 1 Q9 3 10 4 L15.5 4 Q15 8 12 9 L8 9 L7.5 7.5 L1.5 7.5 Z" fill="#fff"/></svg></div>
<div class="a" style="left:1451px;top:873px"><svg width="17" height="17" viewBox="0 0 17 17"><path d="M1 1 L1 6 M4 1 L4 6" stroke="#fff" stroke-width="1.2"/><rect x="0" y="5" width="5" height="4" fill="#fff"/><rect x="2" y="9" width="1.3" height="7" fill="#fff"/>
<rect x="6.5" y="2.5" width="9" height="13.5" fill="#4e4226" stroke="#9a9080" stroke-width="1"/><rect x="9" y="1" width="4" height="1.5" fill="#9a9080"/><path d="M8 9 L15 15.5 M15 9 L8 15.5" stroke="#e82020" stroke-width="1.6"/></svg></div>
<div class="a" style="left:1475px;top:873px"><svg width="17" height="15" viewBox="0 0 17 15"><rect x="0.5" y="0.5" width="4" height="4" fill="none" stroke="#fff" stroke-width="1"/><rect x="2" y="5" width="1.2" height="9" fill="#fff"/><rect x="5.5" y="1" width="10.5" height="9" fill="none" stroke="#fff" stroke-width="1.2"/><rect x="9.5" y="10" width="2" height="2.5" fill="#fff"/><rect x="6.5" y="12" width="8" height="1.2" fill="#fff"/></svg></div>
<div class="a" style="left:1499px;top:873px"><svg width="16" height="16" viewBox="0 0 16 16"><path d="M0.5 5 L3.5 5 L7 1 L7 15 L3.5 11 L0.5 11 Z" fill="#fff"/><path d="M9 6.5 Q10 8 9 9.5 M11 4.5 Q13 8 11 11.5 M13 2.5 Q16 8 13 13.5" fill="none" stroke="#fff" stroke-width="1"/></svg></div>
<div class="a" style="left:1521px;top:864px;width:72px;text-align:center;color:#f4f2ea;font-size:11.5px;line-height:16.5px">4:08<br>28.01.2019</div>

</body></html>
